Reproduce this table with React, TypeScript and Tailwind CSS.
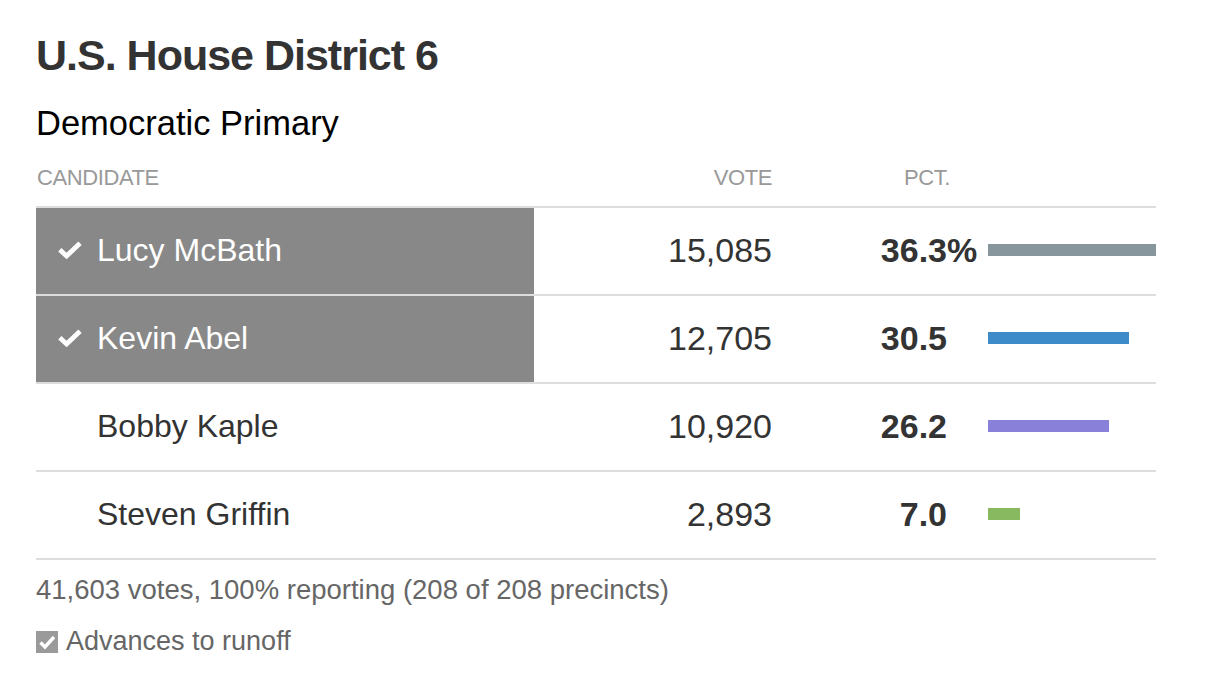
import React from "react";

type Candidate = { name: string; votes: string; pct: number; color: string; winner?: boolean };

const candidates: Candidate[] = [
  { name: "Lucy McBath", votes: "15,085", pct: 36.3, color: "#87959c", winner: true },
  { name: "Kevin Abel", votes: "12,705", pct: 30.5, color: "#3d8bc9", winner: true },
  { name: "Bobby Kaple", votes: "10,920", pct: 26.2, color: "#8880d9" },
  { name: "Steven Griffin", votes: "2,893", pct: 7.0, color: "#88b961" },
];

const MAX_BAR = 168;

function Check({ className }: { className?: string }) {
  return (
    <svg className={className} viewBox="0 0 24 20" fill="none">
      <path d="M1.8 9.8 L8.6 16 L22 3.2" stroke="white" strokeWidth="4.8" strokeLinejoin="miter" />
    </svg>
  );
}

export default function App() {
  const top = Math.max(...candidates.map((c) => c.pct));

  return (
    <div className="min-h-screen bg-white font-['Liberation_Sans',Arial,sans-serif]">
      <div className="w-[1156px] pl-[36px] pt-[32px]">
        <h1 className="text-[43px] leading-[46px] font-bold tracking-[-1px] text-[#333]">U.S. House District 6</h1>
        <h2 className="mt-[28px] text-[34.5px] leading-[34px] text-black">Democratic Primary</h2>

        {/* Header */}
        <div className="grid grid-cols-[498px_238px_175px_41px_168px] border-b-2 border-[#ddd] pt-[25px] pb-[16px] text-[22px] leading-[25px] tracking-[-0.4px] text-[#999] uppercase">
          <div className="pl-[1px]">Candidate</div>
          <div className="text-right">Vote</div>
          <div className="text-right -mr-[3px]">Pct.</div>
          <div />
          <div />
        </div>

        {/* Rows */}
        {candidates.map((c, i) => (
          <div
            key={i}
            className="grid grid-cols-[498px_238px_175px_41px_168px] h-[88px] border-b-2 border-[#ddd] text-[#333]"
          >
            <div className={`flex items-center pb-[3px] ${c.winner ? "bg-[#888] text-white" : ""}`}>
              {c.winner ? (
                <>
                  <Check className="ml-[22px] w-[24px] h-[20px] shrink-0" />
                  <span className="ml-[15px] text-[32px] leading-[32px]">{c.name}</span>
                </>
              ) : (
                <span className="ml-[61px] text-[32px] leading-[32px]">{c.name}</span>
              )}
            </div>
            <div className="flex items-center justify-end pb-[3px] text-[34px] leading-[34px]">{c.votes}</div>
            <div className="flex items-center justify-end pb-[3px] text-[34px] leading-[34px] font-bold">
              <span className="relative">
                {c.pct.toFixed(1)}
                {i === 0 && <span className="absolute left-full top-0">%</span>}
              </span>
            </div>
            <div />
            <div className="flex items-center pb-[3px]">
              <div className="h-[12px]" style={{ width: `${(c.pct / top) * MAX_BAR}px`, backgroundColor: c.color }} />
            </div>
          </div>
        ))}

        <p className="mt-[16px] text-[27.5px] leading-[27px] text-[#666]">
          41,603 votes, 100% reporting (208 of 208 precincts)
        </p>
        <div className="mt-[25px] flex items-center h-[27px] gap-[8px]">
          <span className="flex items-center justify-center w-[22px] h-[22px] bg-[#9a9a9a]">
            <svg viewBox="0 0 22 22" className="w-[22px] h-[22px]" fill="none">
              <path d="M4.5 11.5 L9 16 L18 6" stroke="white" strokeWidth="3.4" />
            </svg>
          </span>
          <span className="text-[27px] leading-[27px] text-[#666]">Advances to runoff</span>
        </div>
      </div>
    </div>
  );
}
